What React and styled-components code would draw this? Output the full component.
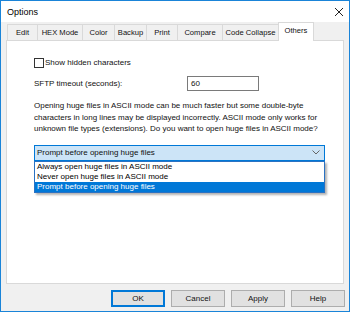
import React from 'react';
import styled, { createGlobalStyle } from 'styled-components';

const GlobalStyle = createGlobalStyle`
	html, body {
		margin: 0;
		padding: 0;
		background: #ffffff;
	}
	* {
		box-sizing: border-box;
	}
`;

const tabs = [
	{ label: 'Edit', width: 31 },
	{ label: 'HEX Mode', width: 46 },
	{ label: 'Color', width: 33 },
	{ label: 'Backup', width: 33 },
	{ label: 'Print', width: 32 },
	{ label: 'Compare', width: 46 },
	{ label: 'Code Collapse', width: 57 },
	{ label: 'Others', width: 36, active: true },
];

const options = [
	'Always open huge files in ASCII mode',
	'Never open huge files in ASCII mode',
	'Prompt before opening huge files',
];

const App = () => {
	return (
		<>
			<GlobalStyle />
			<Window>
				<TitleBar>
					<span>Options</span>
					<CloseIcon width="10" height="10" viewBox="0 0 10 10">
						<path d="M1 1 L9 9 M9 1 L1 9" stroke="#222" strokeWidth="1" fill="none" />
					</CloseIcon>
				</TitleBar>
				<Body>
					<TabStrip>
						{tabs.map((t) => (
							<Tab key={t.label} $width={t.width} $active={t.active}>
								{t.label}
							</Tab>
						))}
					</TabStrip>
					<Panel>
						<CheckRow>
							<CheckBox />
							<span>Show hidden characters</span>
						</CheckRow>
						<FieldRow>
							<span>SFTP timeout (seconds):</span>
							<TextInput>60</TextInput>
						</FieldRow>
						<Paragraph>
							Opening huge files in ASCII mode can be much faster but some double-byte
							characters in long lines may be displayed incorrectly. ASCII mode only works for
							unknown file types (extensions). Do you want to open huge files in ASCII mode?
						</Paragraph>
						<SelectWrap>
							<Select>
								<span>Prompt before opening huge files</span>
								<svg width="8" height="5" viewBox="0 0 8 5">
									<path d="M0.5 0.5 L4 4 L7.5 0.5" stroke="#666" strokeWidth="1" fill="none" />
								</svg>
							</Select>
							<DropList>
								{options.map((o, i) => (
									<Option key={o} $selected={i === 2}>
										{o}
									</Option>
								))}
							</DropList>
						</SelectWrap>
					</Panel>
					<Footer>
						<Button $default>OK</Button>
						<Button>Cancel</Button>
						<Button>Apply</Button>
						<Button>Help</Button>
					</Footer>
				</Body>
			</Window>
		</>
	);
};

export default App;

const Window = styled.div`
	width: 350px;
	height: 312px;
	border: 1px solid #1a84d8;
	background: #f0f0f0;
	display: flex;
	flex-direction: column;
	font-family: 'Liberation Sans', Arial, sans-serif;
	font-size: 8px;
	color: #111;
`;

const TitleBar = styled.div`
	height: 21px;
	background: #ffffff;
	display: flex;
	align-items: center;
	justify-content: space-between;
	padding: 0 5px 0 6px;
	font-size: 9px;
	color: #000;
`;

const CloseIcon = styled.svg`
	display: block;
`;

const Body = styled.div`
	flex: 1;
	display: flex;
	flex-direction: column;
	padding: 0 5px 0 5px;
`;

const TabStrip = styled.div`
	display: flex;
	align-items: flex-end;
	height: 18px;
`;

const Tab = styled.div`
	width: ${(p) => p.$width}px;
	height: ${(p) => (p.$active ? 19 : 16)}px;
	margin-left: -1px;
	margin-bottom: ${(p) => (p.$active ? -1 : 0)}px;
	padding-top: 2px;
	text-align: center;
	font-size: 7.6px;
	background: ${(p) => (p.$active ? '#ffffff' : '#f0f0f0')};
	border: 1px solid #d9d9d9;
	border-bottom: none;
	position: relative;
	z-index: ${(p) => (p.$active ? 2 : 1)};
	white-space: nowrap;
	line-height: 11px;

	&:first-child {
		margin-left: 1px;
	}
`;

const Panel = styled.div`
	height: 244px;
	background: #ffffff;
	border: 1px solid #d9d9d9;
	padding: 16px 0 0 27px;
	display: flex;
	flex-direction: column;
	align-items: flex-start;
`;

const CheckRow = styled.div`
	display: flex;
	align-items: center;
	gap: 1px;
	height: 11px;
`;

const CheckBox = styled.div`
	width: 10px;
	height: 10px;
	border: 1px solid #333333;
	background: #ffffff;
`;

const FieldRow = styled.div`
	display: flex;
	align-items: center;
	margin-top: 8px;
	height: 15px;

	> span {
		width: 153px;
	}
`;

const TextInput = styled.div`
	width: 72px;
	height: 15px;
	border: 1px solid #7a7a7a;
	background: #ffffff;
	padding: 0 3px;
	line-height: 13px;
`;

const Paragraph = styled.p`
	margin: 9px 0 0 0;
	width: 292px;
	line-height: 11.5px;
`;

const SelectWrap = styled.div`
	position: relative;
	margin-top: 10px;
	width: 291px;
`;

const Select = styled.div`
	height: 16px;
	border: 1px solid #0078d7;
	background: #cce4f7;
	display: flex;
	align-items: center;
	justify-content: space-between;
	padding: 0 4px 0 2px;

	svg {
		display: block;
	}
`;

const DropList = styled.div`
	position: absolute;
	left: 0;
	top: 100%;
	width: 291px;
	background: #ffffff;
	border: 1px solid #2a72c3;
	box-shadow: 2px 2px 2px rgba(0, 0, 0, 0.3);
	z-index: 5;
`;

const Option = styled.div`
	height: 10px;
	line-height: 10px;
	padding-left: 2px;
	background: ${(p) => (p.$selected ? '#0078d7' : '#ffffff')};
	color: ${(p) => (p.$selected ? '#ffffff' : '#000000')};
`;

const Footer = styled.div`
	display: flex;
	justify-content: flex-end;
	gap: 6px;
	padding-top: 6px;
	margin-right: -1px;
`;

const Button = styled.div`
	width: 54px;
	height: 17px;
	background: #e1e1e1;
	border: 1px solid ${(p) => (p.$default ? '#0078d7' : '#adadad')};
	box-shadow: ${(p) => (p.$default ? 'inset 0 0 0 1px #0078d7' : 'none')};
	display: flex;
	align-items: center;
	justify-content: center;
`;
